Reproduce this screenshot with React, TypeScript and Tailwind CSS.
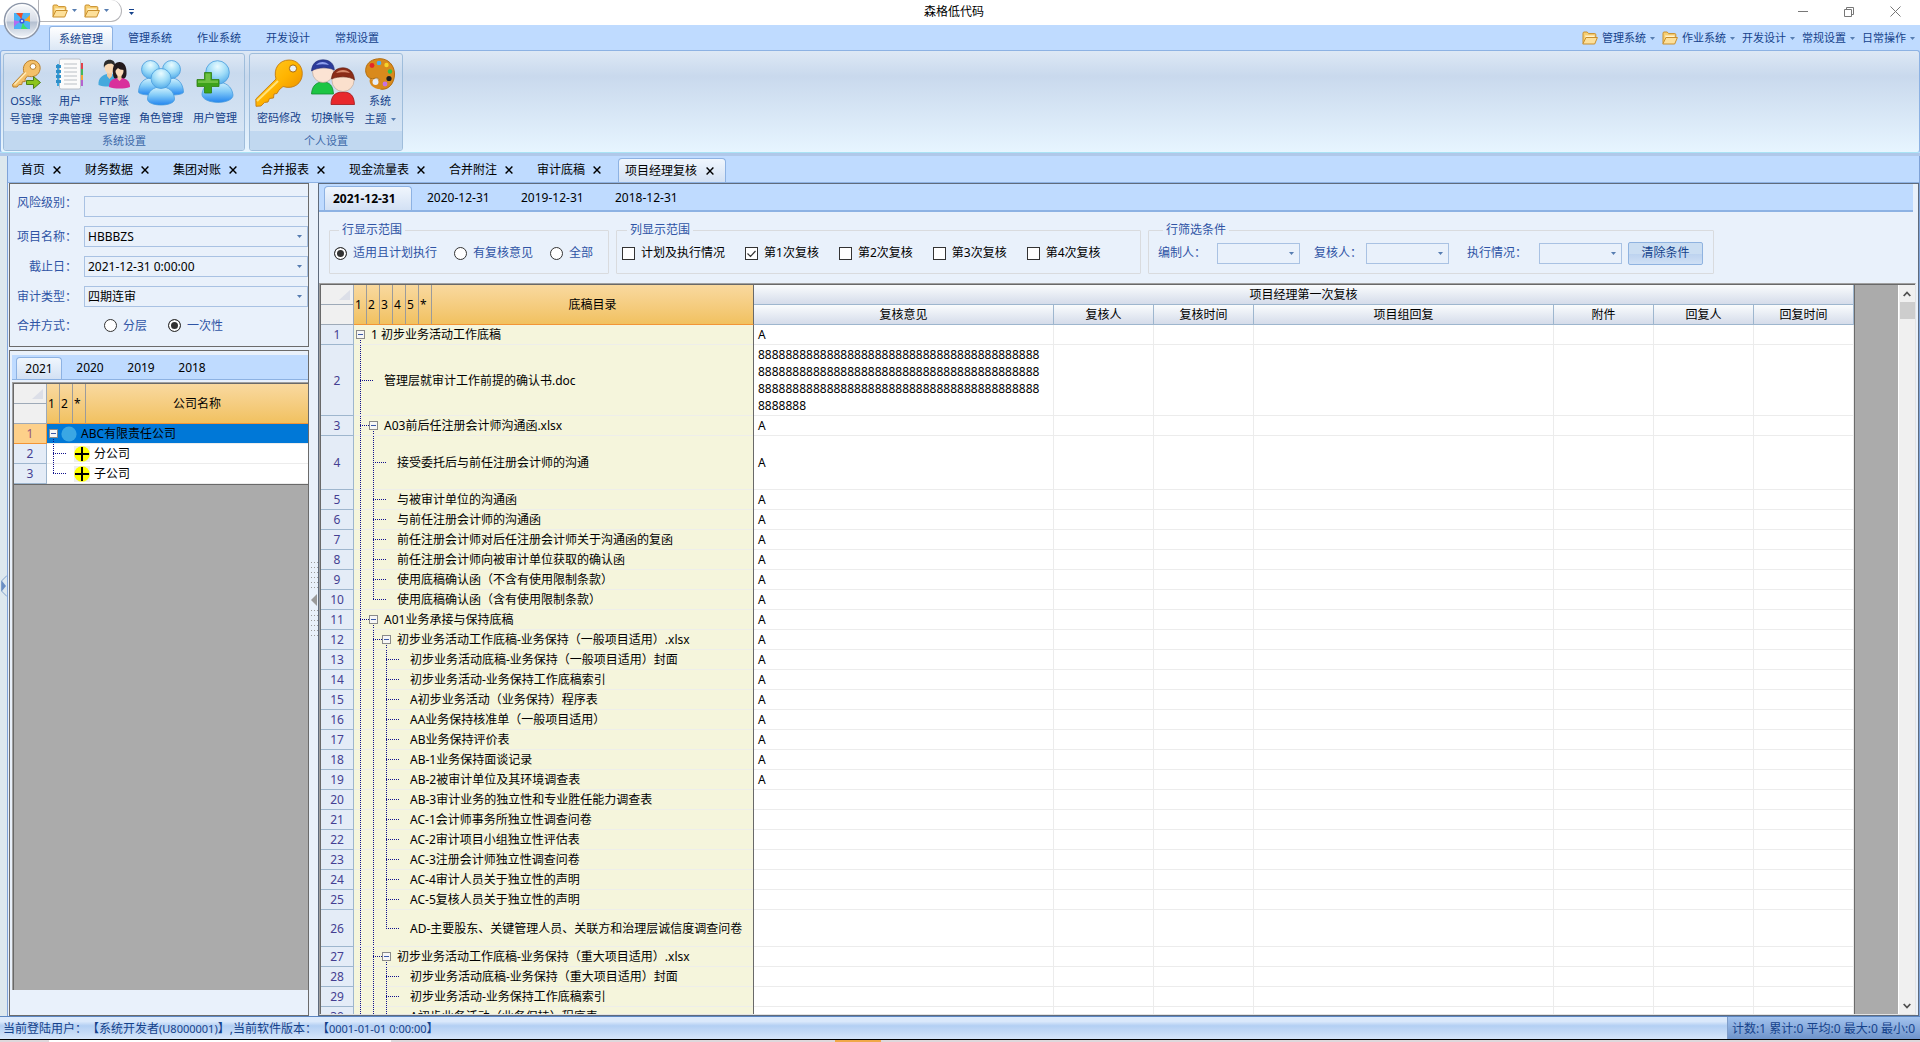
import { useState } from "react";
import type { ReactNode } from "react";

type TreeRow = {
  text: string;
  level: number;
  open?: boolean;
  height?: number;
  note?: string;
  icon?: ReactNode;
};

const ribbonTabs = ["系统管理", "管理系统", "作业系统", "开发设计", "常规设置"];
const quickMenus = [
  { label: "管理系统", folder: true },
  { label: "作业系统", folder: true },
  { label: "开发设计" },
  { label: "常规设置" },
  { label: "日常操作" },
];
const docTabs = ["首页", "财务数据", "集团对账", "合并报表", "现金流量表", "合并附注", "审计底稿", "项目经理复核"];
const years = ["2021", "2020", "2019", "2018"];
const dates = ["2021-12-31", "2020-12-31", "2019-12-31", "2018-12-31"];

const rows: TreeRow[] = [
  { text: "1 初步业务活动工作底稿", level: 0, open: true, note: "A" },
  { text: "管理层就审计工作前提的确认书.doc", level: 1, height: 71, note: "8".repeat(130) },
  { text: "A03前后任注册会计师沟通函.xlsx", level: 1, open: true, note: "A" },
  { text: "接受委托后与前任注册会计师的沟通", level: 2, height: 54, note: "A" },
  { text: "与被审计单位的沟通函", level: 2, note: "A" },
  { text: "与前任注册会计师的沟通函", level: 2, note: "A" },
  { text: "前任注册会计师对后任注册会计师关于沟通函的复函", level: 2, note: "A" },
  { text: "前任注册会计师向被审计单位获取的确认函", level: 2, note: "A" },
  { text: "使用底稿确认函（不含有使用限制条款）", level: 2, note: "A" },
  { text: "使用底稿确认函（含有使用限制条款）", level: 2, note: "A" },
  { text: "A01业务承接与保持底稿", level: 1, open: true, note: "A" },
  { text: "初步业务活动工作底稿-业务保持（一般项目适用）.xlsx", level: 2, open: true, note: "A" },
  { text: "初步业务活动底稿-业务保持（一般项目适用）封面", level: 3, note: "A" },
  { text: "初步业务活动-业务保持工作底稿索引", level: 3, note: "A" },
  { text: "A初步业务活动（业务保持）程序表", level: 3, note: "A" },
  { text: "AA业务保持核准单（一般项目适用）", level: 3, note: "A" },
  { text: "AB业务保持评价表", level: 3, note: "A" },
  { text: "AB-1业务保持面谈记录", level: 3, note: "A" },
  { text: "AB-2被审计单位及其环境调查表", level: 3, note: "A" },
  { text: "AB-3审计业务的独立性和专业胜任能力调查表", level: 3 },
  { text: "AC-1会计师事务所独立性调查问卷", level: 3 },
  { text: "AC-2审计项目小组独立性评估表", level: 3 },
  { text: "AC-3注册会计师独立性调查问卷", level: 3 },
  { text: "AC-4审计人员关于独立性的声明", level: 3 },
  { text: "AC-5复核人员关于独立性的声明", level: 3 },
  { text: "AD-主要股东、关键管理人员、关联方和治理层诚信度调查问卷", level: 3, height: 37 },
  { text: "初步业务活动工作底稿-业务保持（重大项目适用）.xlsx", level: 2, open: true },
  { text: "初步业务活动底稿-业务保持（重大项目适用）封面", level: 3 },
  { text: "初步业务活动-业务保持工作底稿索引", level: 3 },
  { text: "A初步业务活动（业务保持）程序表", level: 3 },
];

const companies: TreeRow[] = [
  { text: "ABC有限责任公司", level: 0, open: true, icon: <DotIcon /> },
  { text: "分公司", level: 1, icon: <PlusIcon /> },
  { text: "子公司", level: 1, icon: <PlusIcon /> },
];

/* ---------- icons ---------- */

function DotIcon() {
  return (
    <svg width="16" height="16" viewBox="0 0 16 16">
      <circle cx="8" cy="8" r="7.6" fill="#3aa7e4" />
    </svg>
  );
}

function PlusIcon() {
  return (
    <svg width="16" height="16" viewBox="0 0 16 16">
      <rect width="16" height="16" fill="#efefef" />
      <circle cx="8" cy="8" r="7.8" fill="#ffff00" />
      <path d="M8 1v14M1 8h14" stroke="#000" strokeWidth="2" />
    </svg>
  );
}

function Caret({ color = "#567db1" }: { color?: string }) {
  return (
    <svg width="5" height="3" viewBox="0 0 5 3" className="shrink-0">
      <path d="M0 0h5L2.5 3z" fill={color} />
    </svg>
  );
}

function FolderIcon() {
  return (
    <svg width="16" height="14" viewBox="0 0 16 14" className="shrink-0">
      <path d="M1 12.5V2.2C1 1.5 1.4 1 2 1h3.2l1.4 1.6h6.2c.6 0 1 .4 1 1V6" fill="#f7cf73" stroke="#c98f2c" />
      <path d="M3 4.5h9.5V7H4z" fill="#fff3cf" />
      <path d="M.8 13L4 6.5h11.4L12.7 13z" fill="#fde09a" stroke="#c98f2c" />
    </svg>
  );
}

function CloseIcon() {
  return (
    <svg width="8" height="8" viewBox="0 0 8 8">
      <path d="M.6.6l6.8 6.8M7.4.6L.6 7.4" stroke="#000" strokeWidth="1.4" />
    </svg>
  );
}

function AppLogo() {
  return (
    <svg width="38" height="38" viewBox="0 0 38 38">
      <defs>
        <linearGradient id="orb" x1="0" y1="0" x2="0" y2="1">
          <stop offset="0" stopColor="#fbfcfd" />
          <stop offset="0.5" stopColor="#d5dbe6" />
          <stop offset="0.53" stopColor="#b4bfd0" />
          <stop offset="1" stopColor="#f4f7fb" />
        </linearGradient>
      </defs>
      <circle cx="19" cy="19" r="17.6" fill="url(#orb)" stroke="#8c96a8" strokeWidth="1.4" />
      <circle cx="19" cy="19" r="16.2" fill="none" stroke="#fff" strokeOpacity="0.8" />
      <rect x="11" y="11" width="16" height="16" fill="#4cb2f5" />
      <path d="M13 11h7q-2 4-1 8-2-5-6-8z" fill="#ef4b23" />
      <path d="M27 13v7q-4-2-8-1 5-2 8-6z" fill="#f9a51f" />
      <path d="M25 27h-7q2-4 1-8 2 5 6 8z" fill="#3fe06a" />
      <path d="M11 25v-7q4 2 8 1-5 2-8 6z" fill="#b46cf0" />
      <circle cx="19" cy="19" r="2.6" fill="#3c5be0" />
      <circle cx="19" cy="19" r="1" fill="#fff" />
    </svg>
  );
}

function OssKeyIcon() {
  return (
    <svg width="30" height="30" viewBox="0 0 30 30">
      <path
        d="M1.5 25.5L13 13.5C11 8 14 2 20.500 1.300 26 1 30 5.500 29 10.500 28 16.500 22 19 16.500 17L14 20l.3 2.500-3 .3-.5 2.700-3 .2L6 28H2z"
        fill="#f4c069"
        stroke="#b97f2b"
      />
      <circle cx="22" cy="7.500" r="2.900" fill="#fff" stroke="#b97f2b" />
      <path d="M3.500 25.500L15 13.500" stroke="#fdeab9" strokeWidth="1.600" />
      <path d="M15.500 21.500h7v-4l7 6-7 6v-4h-7z" fill="#8cc51c" stroke="#4f7f12" />
    </svg>
  );
}

function NotebookIcon() {
  return (
    <svg width="28" height="32" viewBox="0 0 28 32">
      <path d="M22 5h5v6h-5z" fill="#e2414c" />
      <path d="M22 11h5v6h-5z" fill="#41b75c" />
      <path d="M22 17h5v5h-5z" fill="#f3a63a" />
      <path d="M22 22h5v6h-5z" fill="#b463cf" />
      <path d="M1 6h6v22H1z" fill="#3ba4dc" />
      <rect x="3.500" y="1" width="21" height="30" rx="1.500" fill="#fbfbfb" stroke="#b9c0c8" />
      <path d="M8 6h13M8 10h13M8 14h13M8 18h13M8 22h13M8 26h13" stroke="#d0d4d8" strokeWidth="1.500" />
      <path d="M0 7h5v3H0zM0 12h5v3H0zM0 17h5v3H0zM0 22h5v3H0z" fill="#2e8fc9" />
    </svg>
  );
}

function CoupleIcon() {
  return (
    <svg width="32" height="30" viewBox="0 0 32 30">
      <path d="M.5 26C0 19 4 16.500 9 15h5c4 1.500 6 4 6 11-6 2-14 2-19.500 0z" fill="#46a9dd" />
      <path d="M9 13h5v4l-2.500 3L9 17z" fill="#f1c9a0" />
      <ellipse cx="11.500" cy="8.500" rx="4.800" ry="6" fill="#fad9b4" />
      <path d="M6 9C5 3 8 .8 11.500.8S18 3 17 9c-1-3-2-4-4-4.500C10 5 7 5 6 9z" fill="#2c2c2c" />
      <path d="M15 15c-1-8 2-12 6.500-12S29 7 28.500 15c0 3-2 5-4 5.500h-6C16.500 20 15 18 15 15z" fill="#231a1c" />
      <path d="M11 28c0-6 3-8 8-9h5c5 1 8 3 8 9-6 2-15 2-21 0z" fill="#d9309c" />
      <path d="M19.500 16h4v4l-2 2-2-2z" fill="#f1c9a0" />
      <ellipse cx="21.500" cy="12" rx="4" ry="5.300" fill="#fbdcb9" />
      <path d="M17 12c0-4 2-6 4-6s5 1 5 5c-3 0-5-1-6-2-1 1-2 2-3 3z" fill="#231a1c" />
    </svg>
  );
}

function BlueGradients({ id }: { id: string }) {
  return (
    <defs>
      <radialGradient id={id + "h"} cx="0.5" cy="0.25" r="0.8">
        <stop offset="0" stopColor="#e9fbff" />
        <stop offset="0.5" stopColor="#9edcf8" />
        <stop offset="1" stopColor="#4aa6e8" />
      </radialGradient>
      <linearGradient id={id + "b"} x1="0" y1="0" x2="0" y2="1">
        <stop offset="0" stopColor="#d3f2fd" />
        <stop offset="0.45" stopColor="#84ccf8" />
        <stop offset="1" stopColor="#2486ef" />
      </linearGradient>
    </defs>
  );
}

function RolesIcon() {
  return (
    <svg width="46" height="46" viewBox="0 0 46 46">
      <BlueGradients id="r" />
      <g stroke="#4a9ddd" strokeWidth="0.800">
        <path d="M.5 32C1 23 6 18 13 18s11 5 12 14c0 4-24 4-24.500 0z" fill="url(#rb)" />
        <circle cx="12.500" cy="9.500" r="9" fill="url(#rh)" />
        <path d="M21 32c1-9 5-14 12-14s12 5 12.500 14c0 4-24 4-24.500 0z" fill="url(#rb)" />
        <circle cx="33.500" cy="9.500" r="9" fill="url(#rh)" />
        <path d="M9.500 39C10 31 15 27 23 27s13 4 13.500 12c0 8-27 8-27 0z" fill="url(#rb)" />
        <circle cx="23" cy="18.500" r="10" fill="url(#rh)" />
      </g>
    </svg>
  );
}

function AddUserIcon() {
  return (
    <svg width="38" height="46" viewBox="0 0 38 46">
      <BlueGradients id="u" />
      <path d="M6 34c1-8 7-12 15-12s15 4 16 13c0 10-31 10-31-1z" fill="url(#ub)" stroke="#4a9ddd" strokeWidth="0.800" />
      <circle cx="21.500" cy="12.500" r="11.800" fill="url(#uh)" stroke="#4a9ddd" strokeWidth="0.800" />
      <path d="M8.500 12.500h7v7H23v7h-7.500v6.500h-7v-6.500H1v-7h7.500z" fill="#3da21a" stroke="#2f7d12" strokeWidth="0.800" />
      <path d="M9.500 13.500h5v7H22v2.500H2v-2.500h7.500z" fill="#84cf55" fillOpacity="0.700" />
    </svg>
  );
}

function BigKeyIcon() {
  return (
    <svg width="48" height="48" viewBox="0 0 48 48">
      <defs>
        <linearGradient id="gold" x1="0" y1="0" x2="1" y2="1">
          <stop offset="0" stopColor="#ffcf2e" />
          <stop offset="0.500" stopColor="#ffb400" />
          <stop offset="1" stopColor="#e07d00" />
        </linearGradient>
      </defs>
      <path
        d="M.8 40L21 20C18 10 24 1 34 1c8 0 13.300 6 13.300 13.500C47.300 24 39 31 28 27.500L24 31l-2 3.500-3 .5-.5 4-4 .5-1.500 3.500-3.500.5L6 47l-5 .3z"
        fill="url(#gold)"
        stroke="#c27c14"
        strokeWidth="0.900"
      />
      <path d="M2 42l21-20" stroke="#ffe37a" strokeWidth="2" />
      <circle cx="38" cy="9.500" r="3.600" fill="#e9f1fa" stroke="#a86b10" />
    </svg>
  );
}

function SwitchUserIcon() {
  return (
    <svg width="44" height="47" viewBox="0 0 44 47">
      <path d="M.5 35C1 27 5 23 12 23s10 4 10.500 12z" fill="#1cc544" stroke="#138a2e" strokeWidth="0.800" />
      <circle cx="12" cy="13" r="10.500" fill="#fbe3d3" stroke="#b9a08f" strokeWidth="0.600" />
      <path d="M.5 12C1 4 6 .8 12 .8S23 4 23.300 11C17 8 7 8 .5 12z" fill="#2b3b9a" stroke="#1c2670" strokeWidth="0.600" />
      <path d="M5 6c3-4 10-4 13 0-4-1-9-1-13 0z" fill="#8fa0ee" />
      <path d="M20 45.500C20 37 24 33 32 33s11 4 11.500 12.500z" fill="#e8282c" stroke="#9e1719" strokeWidth="0.800" />
      <circle cx="32" cy="21.500" r="11" fill="#fbe0cd" stroke="#b9a08f" strokeWidth="0.600" />
      <path d="M20.500 20C21 12 26 8.800 32 8.800S43 13 43.500 21C39 17 27 17 20.500 20z" fill="#8b2c18" stroke="#5d1a0c" strokeWidth="0.600" />
      <path d="M25 14c3-4 11-4 14 0-4-1-10-1-14 0z" fill="#d98a6c" />
    </svg>
  );
}

function PaletteIcon() {
  return (
    <svg width="30" height="32" viewBox="0 0 30 32">
      <path
        d="M15 .7C23 .7 29.500 7 29.500 16S24 31.500 17 31.300c-4-.3-3-4-2.500-7s-2-5-4-4.300-4 1-6 0C1 18 .3 13 .8 10.500 2 4 8 .7 15 .7z"
        fill="#d98a1c"
        stroke="#b26c0e"
      />
      <path d="M5 21c-2 4 3 10.500 11 10.300V22z" fill="#d98a1c" />
      <circle cx="10.500" cy="24" r="3" fill="#e6eef8" />
      <circle cx="7" cy="7.500" r="2.400" fill="#e5262a" />
      <circle cx="14" cy="5" r="2.300" fill="#4fb0ee" />
      <circle cx="21.500" cy="7" r="2.200" fill="#f6d42b" />
      <circle cx="25" cy="13.500" r="2.200" fill="#31c24a" />
      <circle cx="24" cy="20.500" r="2.600" fill="#1f1f1f" />
      <circle cx="20" cy="26" r="2.400" fill="#c671e2" />
    </svg>
  );
}

/* ---------- ribbon ---------- */

function RibbonButton({ icon, lines, width, menu }: { icon: ReactNode; lines: string[]; width: string; menu?: boolean }) {
  return (
    <button className={`flex flex-col items-center text-[11px] text-[#15428b] ${width}`}>
      <span className={lines.length > 1 ? "flex h-9 items-center justify-center" : "flex h-[53px] items-center justify-center"}>
        {icon}
      </span>
      {lines.map((line, i) => (
        <span key={line} className="flex items-center gap-1 leading-[18px] whitespace-nowrap">
          {line}
          {menu && i === lines.length - 1 && <Caret />}
        </span>
      ))}
    </button>
  );
}

function RibbonGroup({ title, children }: { title: string; children: ReactNode }) {
  return (
    <section className="flex h-[98px] flex-col overflow-hidden rounded-[3px] border border-[#9fbddb] bg-linear-to-b from-[#dee8f5] from-0% via-[#c9daee] via-20% to-[#dbe9f7] to-100%">
      <div className="flex flex-1 items-start pt-[2px]">{children}</div>
      <h2 className="h-[19px] bg-[#c1d8f0] text-center text-[11px] leading-[20px] text-[#3e6aaa]">{title}</h2>
    </section>
  );
}

function TitleBar() {
  return (
    <header className="flex h-[25px] shrink-0 bg-white text-black">
      <div className="flex w-36 items-start">
        <div className="ml-[38px] flex h-[22px] w-[84px] items-center gap-1 rounded-r-full border border-t-0 border-[#b4b4b8] pl-[13px]">
          <button aria-label="打开" className="flex items-center gap-1">
            <FolderIcon />
            <Caret />
          </button>
          <button aria-label="最近" className="ml-[3px] flex items-center gap-1">
            <FolderIcon />
            <Caret />
          </button>
        </div>
        <button aria-label="自定义" className="mt-[9px] ml-[7px] flex flex-col items-center gap-[2px]">
          <span className="h-px w-[5px] bg-[#15428b]" />
          <Caret color="#15428b" />
        </button>
      </div>
      <h1 className="flex-1 text-center text-[12px] leading-[23px]">森格低代码</h1>
      <div className="flex w-39 justify-end pr-[2px]">
        <button aria-label="最小化" className="flex h-[23px] w-[46px] items-center justify-center">
          <span className="h-px w-[10px] bg-[#777]" />
        </button>
        <button aria-label="还原" className="flex h-[23px] w-[46px] items-center justify-center">
          <svg width="10" height="10" viewBox="0 0 10 10" fill="none" stroke="#777">
            <path d="M.5 2.500h7v7h-7zM2.500 2.500v-2h7v7h-2" />
          </svg>
        </button>
        <button aria-label="关闭" className="flex h-[23px] w-[46px] items-center justify-center">
          <svg width="11" height="11" viewBox="0 0 11 11" stroke="#777">
            <path d="M.5.5l10 10M10.500.5l-10 10" />
          </svg>
        </button>
      </div>
    </header>
  );
}

function Ribbon() {
  return (
    <div className="shrink-0">
      <div className="flex h-[25px] items-end justify-between bg-[#bfdbff] pl-[49px] text-[11px] text-[#15428b]">
        <nav className="flex h-6 gap-[5px]">
          {ribbonTabs.map((tab, i) => (
            <button
              key={tab}
              className={
                i === 0
                  ? "w-16 rounded-t-[3px] border border-b-0 border-[#8db2e3] bg-linear-to-b from-white to-[#dbe7f5] leading-[21px]"
                  : "w-16 leading-[22px]"
              }
            >
              {tab}
            </button>
          ))}
        </nav>
        <div className="flex h-6 items-center gap-[7px] pr-[5px]">
          {quickMenus.map((menu) => (
            <button key={menu.label} className="flex items-center gap-1 leading-[22px] whitespace-nowrap">
              {menu.folder && <FolderIcon />}
              {menu.label}
              <Caret />
            </button>
          ))}
        </div>
      </div>
      <div className="flex h-[103px] gap-1 rounded-[3px] border border-x-[#8db2e3] border-t-[#8db2e3] border-b-[#a9e3f5] bg-linear-to-b from-[#dde8f5] from-0% via-[#c9d9ed] via-25% to-[#e7f5ff] to-100% pt-[2px] pl-[2px]">
        <RibbonGroup title="系统设置">
          <RibbonButton width="w-11" icon={<OssKeyIcon />} lines={["OSS账", "号管理"]} />
          <RibbonButton width="w-11" icon={<NotebookIcon />} lines={["用户", "字典管理"]} />
          <RibbonButton width="w-11" icon={<CoupleIcon />} lines={["FTP账", "号管理"]} />
          <RibbonButton width="w-[50px]" icon={<RolesIcon />} lines={["角色管理"]} />
          <RibbonButton width="w-[58px]" icon={<AddUserIcon />} lines={["用户管理"]} />
        </RibbonGroup>
        <RibbonGroup title="个人设置">
          <RibbonButton width="w-[58px]" icon={<BigKeyIcon />} lines={["密码修改"]} />
          <RibbonButton width="w-[50px]" icon={<SwitchUserIcon />} lines={["切换帐号"]} />
          <RibbonButton width="w-11" icon={<PaletteIcon />} lines={["系统", "主题"]} menu />
        </RibbonGroup>
      </div>
      <div className="h-[3px] bg-[#b0c8e9]" />
    </div>
  );
}

/* ---------- form controls ---------- */

function Select({ id, value, className }: { id: string; value?: string; className: string }) {
  return (
    <span className={`relative flex h-[21px] items-center ${className}`}>
      <select
        id={id}
        defaultValue={value}
        className="h-full w-full appearance-none border border-[#a9c2e3] bg-[#e9f1fb] px-[3px] text-[12px] leading-[19px] text-black outline-none"
      >
        <option>{value}</option>
      </select>
      <span className="pointer-events-none absolute right-[6px] flex">
        <Caret />
      </span>
    </span>
  );
}

function Radio({ name, label, checked }: { name: string; label: string; checked?: boolean }) {
  return (
    <label className="flex items-center gap-[6px] whitespace-nowrap text-[#2f54a5]">
      <input
        type="radio"
        name={name}
        defaultChecked={checked}
        className="size-[13px] shrink-0 appearance-none rounded-full border border-[#333] bg-white checked:bg-[#333] checked:shadow-[inset_0_0_0_2px_#fff]"
      />
      {label}
    </label>
  );
}

function Checkbox({ label, checked }: { label: string; checked?: boolean }) {
  return (
    <label className="relative flex items-center gap-[6px] whitespace-nowrap text-black">
      <input type="checkbox" defaultChecked={checked} className="peer size-[13px] shrink-0 appearance-none border border-[#333] bg-white" />
      <svg
        width="13"
        height="13"
        viewBox="0 0 13 13"
        className="pointer-events-none absolute left-0 hidden fill-none stroke-[#333] peer-checked:block"
      >
        <path d="M2.500 6.500l3 3 5-5.500" strokeWidth="1.200" />
      </svg>
      {label}
    </label>
  );
}

function GroupBox({ title, className, children }: { title: string; className: string; children: ReactNode }) {
  return (
    <fieldset className={`h-[53px] rounded-[1px] border border-[#d9dbde] ${className}`}>
      <legend className="ml-[5px] px-[3px] leading-[18px] text-[#2f54a5]">{title}</legend>
      <div className="flex h-[28px] items-center">{children}</div>
    </fieldset>
  );
}

/* ---------- tree ---------- */

// Is there another node further down that hangs on the vertical line of this level?
function lineGoesOn(list: TreeRow[], index: number, level: number, tail: boolean) {
  for (let i = index + 1; i < list.length; i++) {
    if (list[i].level <= level) return false;
    if (list[i].level === level + 1) return true;
  }
  return tail;
}

function TreeLines({ list, index, tail = false }: { list: TreeRow[]; index: number; tail?: boolean }) {
  const { level, open } = list[index];
  // one pixel of the row belongs to its bottom border
  const height = (list[index].height ?? 20) - 1;
  const mid = Math.floor(height / 2) + 0.5;
  const width = 13 * (level + 1);
  const own = 13 * level + 6;
  const lines: ReactNode[] = [];

  for (let k = 0; k < level; k++) {
    const x = 13 * k + 6.5;
    const goesOn = lineGoesOn(list, index, k, tail);
    if (goesOn) lines.push(<line key={k} x1={x} x2={x} y1={0} y2={height} />);
    else if (k === level - 1) lines.push(<line key={k} x1={x} x2={x} y1={0} y2={mid} />);
  }
  if (level > 0) lines.push(<line key="h" x1={own - 13} x2={open ? own - 4 : own} y1={mid} y2={mid} />);
  if (open) lines.push(<line key="d" x1={own + 0.5} x2={own + 0.5} y1={mid + 5.5} y2={height} />);

  return (
    <svg width={width} height={height} className="shrink-0" shapeRendering="crispEdges">
      <g stroke="#10108c" strokeDasharray="1 1">
        {lines}
      </g>
      {open && (
        <g>
          <rect x={own - 3.5} y={mid - 4} width="8" height="8" fill="#f6f6f6" stroke="#8a8a8a" />
          <path d={`M${own - 2} ${mid}h5`} stroke="#3b5aa8" />
        </g>
      )}
    </svg>
  );
}

function LevelHeader({ levels, title }: { levels: string[]; title: string }) {
  return (
    <div className="flex h-full items-stretch">
      {levels.map((n) => (
        <span key={n} className="flex w-[13px] items-center border-r border-[#9b9b9b] pl-px">
          {n}
        </span>
      ))}
      <span className="flex flex-1 items-center justify-center">{title}</span>
    </div>
  );
}

function CornerMark() {
  return (
    <svg width="11" height="10" viewBox="0 0 11 10" className="ml-auto">
      <path d="M11 0v10H0z" fill="#dcdfe8" />
    </svg>
  );
}

const cornerCell = "h-5 border-r border-b border-[#9eaab8] bg-[#f0f0f0] p-0 pr-[3px]";
const treeHead = "h-10 border-b border-[#f29536] bg-linear-to-b from-[#f9d99f] to-[#f1c15f] p-0 font-normal";
const colHead = "h-5 overflow-hidden border-r border-b border-[#9eb6ce] bg-linear-to-b from-[#fafcfd] to-[#d5dcea] p-0 text-center font-normal leading-[19px]";
const numCell = "border-r border-b border-[#9eb6ce] bg-[#e4ecf7] p-0 text-center font-normal text-[#453f92]";

function CompanyGrid() {
  return (
    <table className="w-full table-fixed border-separate border-spacing-0 text-[12px] leading-[19px] text-black">
      <colgroup>
        <col className="w-[33px]" />
        <col />
      </colgroup>
      <thead>
        <tr>
          <th className={cornerCell}>
            <CornerMark />
          </th>
          <th rowSpan={2} className={treeHead}>
            <LevelHeader levels={["1", "2", "*"]} title="公司名称" />
          </th>
        </tr>
        <tr>
          <th className={cornerCell} />
        </tr>
      </thead>
      <tbody>
        {companies.map((row, i) => (
          <tr key={row.text} className={i === 0 ? "bg-[#0078d7]" : "bg-white"}>
            <th
              className={
                i === 0
                  ? "border-r border-b border-[#f29536] bg-[#fdd08a] p-0 text-center font-normal text-[#96557a]"
                  : numCell
              }
            >
              {i + 1}
            </th>
            <td className="h-5 border-b border-[#ececec] p-0">
              <div className="flex h-[19px] items-center overflow-hidden">
                <TreeLines list={companies} index={i} />
                <span className="mr-[4px] ml-px shrink-0">{row.icon}</span>
                <span className="whitespace-nowrap">{row.text}</span>
              </div>
            </td>
          </tr>
        ))}
      </tbody>
    </table>
  );
}

function ReviewGrid() {
  const columns = ["复核意见", "复核人", "复核时间", "项目组回复", "附件", "回复人", "回复时间"];
  return (
    <table className="w-[1533px] table-fixed border-separate border-spacing-0 border-r border-[#6b6b6b] text-[12px] leading-[17px] text-black">
      <colgroup>
        <col className="w-[33px]" />
        <col className="w-[400px]" />
        <col className="w-[300px]" />
        <col className="w-[100px]" />
        <col className="w-[100px]" />
        <col className="w-[300px]" />
        <col className="w-[100px]" />
        <col className="w-[100px]" />
        <col className="w-[100px]" />
      </colgroup>
      <thead>
        <tr>
          <th className={cornerCell}>
            <CornerMark />
          </th>
          <th rowSpan={2} className={`${treeHead} border-r border-r-[#696969]`}>
            <LevelHeader levels={["1", "2", "3", "4", "5", "*"]} title="底稿目录" />
          </th>
          <th colSpan={7} className={colHead}>
            项目经理第一次复核
          </th>
        </tr>
        <tr>
          <th className={cornerCell} />
          {columns.map((c) => (
            <th key={c} className={colHead}>
              {c}
            </th>
          ))}
        </tr>
      </thead>
      <tbody>
        {rows.map((row, i) => (
          <tr key={i}>
            <th className={numCell}>{i + 1}</th>
            <td className="border-r border-r-[#696969] bg-[#f5f5dc] p-0">
              <div
                className="flex items-center overflow-hidden border-b border-[#eeeeea]"
                style={{ height: row.height ?? 20 }}
              >
                <TreeLines list={rows} index={i} tail />
                <span className="ml-[4px] whitespace-nowrap">{row.text}</span>
              </div>
            </td>
            <td className="border-r border-b border-[#ececec] bg-white py-0 pr-[10px] pl-[4px] break-all">{row.note}</td>
            {columns.slice(1).map((c) => (
              <td key={c} className="border-r border-b border-[#ececec] bg-white p-0" />
            ))}
          </tr>
        ))}
      </tbody>
    </table>
  );
}

/* ---------- panels ---------- */

function FilterForm() {
  const label = "w-[63px] shrink-0 text-right text-[#2f54a5]";
  return (
    <form className="flex shrink-0 flex-col gap-[9px] border border-[#6b6b6b] bg-[#e9f1fb] pt-3 pb-[11px] pl-1 leading-[19px]">
      <div className="flex items-start gap-[7px]">
        <label htmlFor="risk" className="w-[63px] shrink-0 text-right leading-[14px] text-[#2f54a5]">
          风险级别：
        </label>
        <input id="risk" className="h-[21px] min-w-0 flex-1 border border-r-0 border-[#a9c2e3] bg-[#e9f1fb] px-1 outline-none" />
      </div>
      <div className="flex items-center gap-[7px]">
        <label htmlFor="project" className={label}>
          项目名称：
        </label>
        <Select id="project" value="HBBBZS" className="flex-1" />
      </div>
      <div className="flex items-center gap-[7px]">
        <label htmlFor="deadline" className={label}>
          截止日：
        </label>
        <Select id="deadline" value="2021-12-31 0:00:00" className="flex-1" />
      </div>
      <div className="flex items-center gap-[7px]">
        <label htmlFor="audit" className={label}>
          审计类型：
        </label>
        <Select id="audit" value="四期连审" className="flex-1" />
      </div>
      <div className="flex h-[19px] items-center">
        <span className={label}>合并方式：</span>
        <div className="ml-[27px] flex gap-[21px]">
          <Radio name="merge" label="分层" />
          <Radio name="merge" label="一次性" checked />
        </div>
      </div>
    </form>
  );
}

function Sidebar() {
  const [year, setYear] = useState("2021");
  return (
    <aside className="flex w-[300px] shrink-0 flex-col gap-[3px]">
      <FilterForm />
      <section className="flex min-h-0 flex-1 flex-col border border-[#6b6b6b] bg-[#e9f1fb] pt-1 pb-[25px] pl-[2px]">
        <div className="flex h-[25px] items-end gap-[5px] border-b border-[#8db2e3] bg-[#bfdbff] pl-[4px]">
          {years.map((y) => (
            <button
              key={y}
              onClick={() => setYear(y)}
              className={
                y === year
                  ? "h-[22px] w-[46px] rounded-t-[4px] border border-b-0 border-[#8db2e3] bg-linear-to-b from-[#f0f6fd] to-[#d3e1f4] text-black"
                  : "h-[22px] w-[46px] text-black"
              }
            >
              {y}
            </button>
          ))}
        </div>
        <div className="mt-[2px] flex-1 overflow-hidden border-t border-l border-[#a0a0a0] bg-[#ababab]">
          <div className="h-full border-t border-l border-[#696969]">
            <div className="border-b border-[#696969]">
              <CompanyGrid />
            </div>
          </div>
        </div>
      </section>
    </aside>
  );
}

function Dots() {
  return (
    <svg width="8" height="28" viewBox="0 0 8 28" shapeRendering="crispEdges">
      <path
        d="M1 .5h7M1 5.500h7M1 10.500h7M1 15.500h7M1 20.500h7M1 25.500h7"
        stroke="#9a9a9a"
        strokeDasharray="1 2"
      />
    </svg>
  );
}

function Splitter() {
  return (
    <div className="flex w-[9px] shrink-0 flex-col items-center justify-center gap-1 bg-[#e9f1fb]">
      <Dots />
      <svg width="6" height="12" viewBox="0 0 6 12">
        <path d="M6 0v12L0 6z" fill="#9a9a9a" />
      </svg>
      <Dots />
    </div>
  );
}

function FilterBar() {
  return (
    <form className="flex gap-[7px] pt-[9px] pb-[9px] pl-[10px]">
      <GroupBox title="行显示范围" className="w-[280px] pl-[4px]">
        <div className="flex gap-[17px]">
          <Radio name="range" label="适用且计划执行" checked />
          <Radio name="range" label="有复核意见" />
          <Radio name="range" label="全部" />
        </div>
      </GroupBox>
      <GroupBox title="列显示范围" className="w-[525px] pl-[5px]">
        <div className="flex gap-5">
          <Checkbox label="计划及执行情况" />
          <Checkbox label="第1次复核" checked />
          <Checkbox label="第2次复核" />
          <Checkbox label="第3次复核" />
          <Checkbox label="第4次复核" />
        </div>
      </GroupBox>
      <GroupBox title="行筛选条件" className="w-[566px] pl-[9px]">
        <label htmlFor="author" className="w-[59px] text-[#2f54a5]">
          编制人：
        </label>
        <Select id="author" className="w-[83px]" />
        <label htmlFor="reviewer" className="ml-[14px] w-[52px] text-[#2f54a5]">
          复核人：
        </label>
        <Select id="reviewer" className="w-[83px]" />
        <label htmlFor="state" className="ml-[18px] w-[72px] text-[#2f54a5]">
          执行情况：
        </label>
        <Select id="state" className="w-[83px]" />
        <button
          type="button"
          className="ml-[6px] h-[23px] w-[75px] rounded-[2px] border border-[#8fb3e0] bg-linear-to-b from-[#cbdef2] from-50% via-[#bcd2ef] via-50% to-[#cfe0f5] text-[#15428b]"
        >
          清除条件
        </button>
      </GroupBox>
    </form>
  );
}

function ScrollBar() {
  return (
    <div className="flex w-[17px] shrink-0 flex-col items-center border-l border-white bg-[#f0f0f0]">
      <button aria-label="向上滚动" className="flex h-[17px] items-center">
        <svg width="8" height="6" viewBox="0 0 8 6" fill="none" stroke="#505050" strokeWidth="1.800">
          <path d="M.7 5L4 1.500 7.300 5" />
        </svg>
      </button>
      <div className="h-[17px] w-[15px] bg-[#cdcdcd]" />
      <button aria-label="向下滚动" className="mt-auto flex h-[17px] items-center">
        <svg width="8" height="6" viewBox="0 0 8 6" fill="none" stroke="#505050" strokeWidth="1.800">
          <path d="M.7 1L4 4.500 7.300 1" />
        </svg>
      </button>
    </div>
  );
}

function ReviewPanel() {
  const [date, setDate] = useState("2021-12-31");
  return (
    <main className="flex min-w-0 flex-1 flex-col border border-[#5f6b7c] bg-[#e9f1fb]">
      <div className="mr-[5px] flex h-[28px] shrink-0 items-end gap-[6px] border-b-2 border-[#8db2e3] bg-[#bfdbff] pl-[5px] text-black">
        {dates.map((d) => (
          <button
            key={d}
            onClick={() => setDate(d)}
            className={
              d === date
                ? "h-[24px] w-[88px] rounded-t-[4px] border border-b-0 border-[#8db2e3] bg-linear-to-b from-[#f0f6fd] to-[#d3e1f4] pl-2 text-left font-bold"
                : "h-[24px] w-[88px] pl-[9px] text-left"
            }
          >
            {d}
          </button>
        ))}
      </div>
      <FilterBar />
      <div className="mr-[2px] flex min-h-0 flex-1 border border-[#a0a0a0] border-r-[#e3e3e3] border-b-[#e3e3e3]">
        <div className="flex min-w-0 flex-1 border-t border-l border-[#696969]">
          <div className="min-w-0 flex-1 overflow-hidden bg-[#ababab]">
            <ReviewGrid />
          </div>
          <ScrollBar />
        </div>
      </div>
    </main>
  );
}

function StatusBar() {
  return (
    <footer className="flex h-[22px] shrink-0 bg-linear-to-b from-[#dbe9fb] from-20% via-[#b3cff3] via-40% to-[#d6e6fa] leading-[23px] text-[#15428b]">
      <p className="flex-1 pl-[3px] [text-spacing-trim:space-all]">
        当前登陆用户：【系统开发者<span className="text-[11px]">(U8000001)</span>】,当前软件版本：【
        <span className="text-[11px]">0001-01-01 0:00:00</span>】
      </p>
      <p className="border-l border-[#7f9dc9] bg-linear-to-b from-[#a3c3ee] to-[#6f94cb] pr-[5px] pl-1">
        计数:1 累计:0 平均:0 最大:0 最小:0
      </p>
    </footer>
  );
}

export default function App() {
  const [active, setActive] = useState("项目经理复核");
  return (
    <div className="relative flex h-screen flex-col overflow-hidden bg-[#bfdbff] font-['Noto_Sans','Noto_Sans_CJK_SC',sans-serif] text-[12px]">
      <TitleBar />
      <button aria-label="应用菜单" className="absolute top-[2px] left-[3px]">
        <AppLogo />
      </button>
      <Ribbon />
      <div className="flex min-h-0 flex-1">
        <div className="flex w-[7px] shrink-0 items-center bg-[#dde8ee]">
          <svg width="7" height="22" viewBox="0 0 7 22">
            <path d="M7 .5L1.500 6v10L7 21.500" fill="none" stroke="#7f9fca" />
            <path d="M2 6l4 5-4 5z" fill="#6b8fc4" />
          </svg>
        </div>
        <div className="flex min-w-0 flex-1 flex-col border-x border-[#7fa3d8]">
          <nav className="flex h-[27px] shrink-0 items-end gap-[5px] border-b border-[#8db2e3] bg-[#bfdbff] pl-[6px] text-black">
            {docTabs.map((tab) => (
              <div
                key={tab}
                className={
                  tab === active
                    ? "flex h-6 items-center gap-[9px] rounded-t-[4px] border border-b-0 border-[#8db2e3] bg-linear-to-b from-[#f0f6fd] to-[#d3e1f4] pr-[11px] pl-[6px]"
                    : "flex h-6 items-center gap-2 pr-3 pl-[7px]"
                }
              >
                <button onClick={() => setActive(tab)} className="whitespace-nowrap">
                  {tab}
                </button>
                <button aria-label={`关闭${tab}`}>
                  <CloseIcon />
                </button>
              </div>
            ))}
          </nav>
          <div className="flex min-h-0 flex-1 bg-[#e9f1fb] pl-px">
            <Sidebar />
            <Splitter />
            <ReviewPanel />
          </div>
        </div>
      </div>
      <div className="h-px shrink-0 bg-[#5b86c2]" />
      <StatusBar />
      <div className="flex h-[3px] shrink-0 border-t border-black bg-[#ded8dc]">
        <div className="ml-[49px] w-[342px] bg-white" />
        <div className="ml-[444px] w-[46px] bg-[#f0a848]" />
      </div>
    </div>
  );
}
